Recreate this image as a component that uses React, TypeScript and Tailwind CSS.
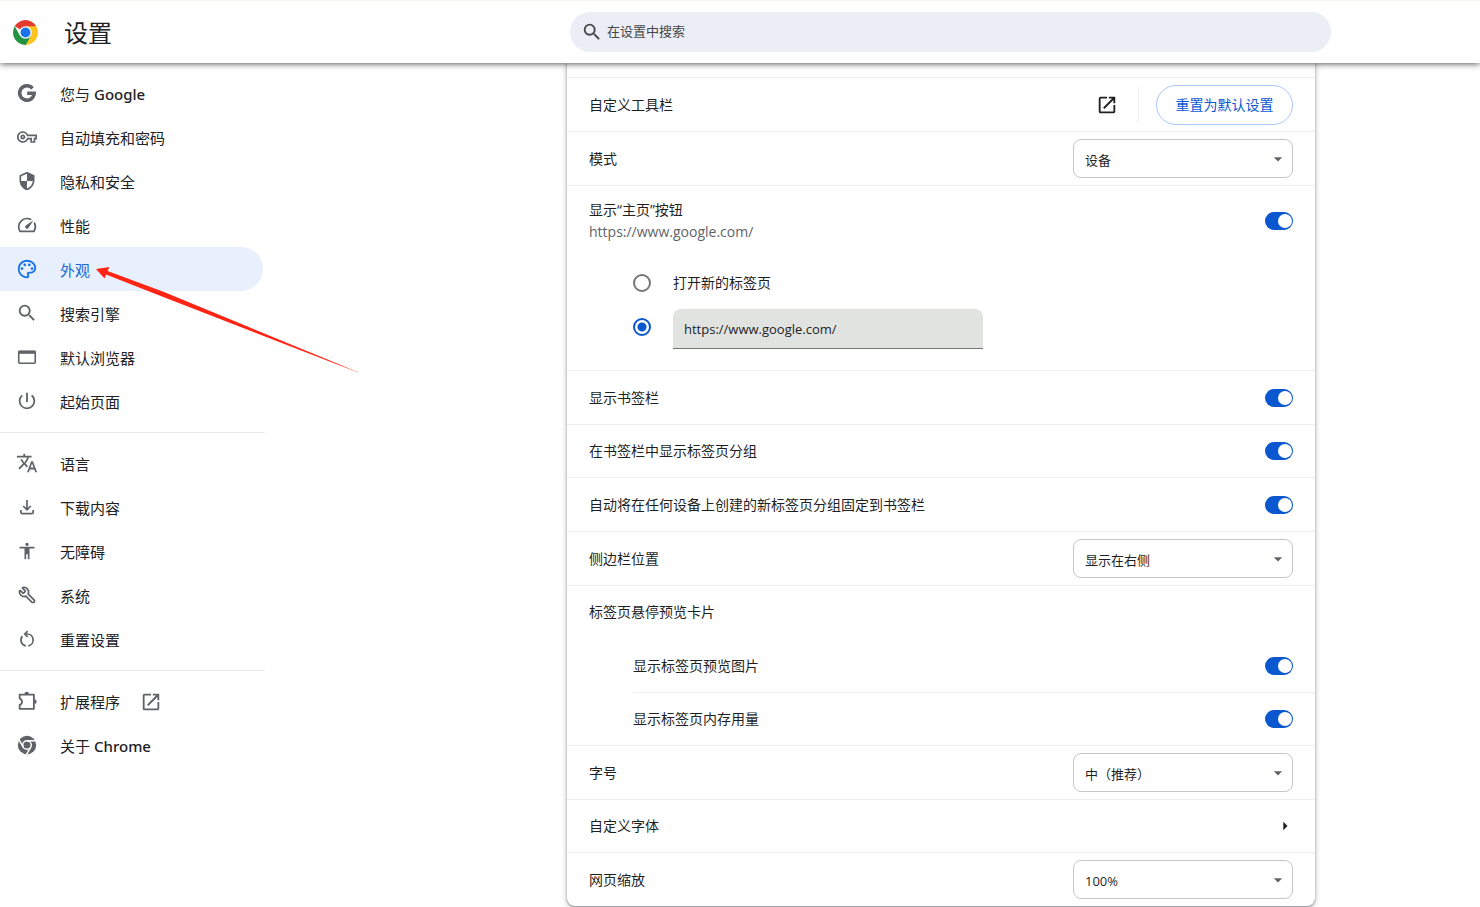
import { useState } from "react";
import type { ReactNode } from "react";
import { clsx } from "clsx";
import { Wrench } from "lucide-react";
import {
  MdAccessibility,
  MdArrowDropDown,
  MdArrowRight,
  MdOpenInNew,
  MdOutlinePalette,
  MdOutlineVpnKey,
  MdPowerSettingsNew,
  MdSearch,
  MdSecurity,
} from "react-icons/md";

const ICON = "w-[22px] h-[22px]";

function GoogleIcon() {
  return (
    <svg viewBox="0 0 24 24" className={ICON} fill="none" stroke="currentColor" strokeWidth="3.9">
      <path d="M18 6.900A7.900 7.900 0 1 0 19.800 12.300H12.200" />
    </svg>
  );
}

function SpeedIcon() {
  return (
    <svg viewBox="0 0 24 24" className={ICON} fill="currentColor">
      <path d="m20.38 8.57-1.23 1.85a8 8 0 0 1-.22 7.58H5.07A8 8 0 0 1 15.58 6.85l1.85-1.23A10 10 0 0 0 3.35 19a2 2 0 0 0 1.72 1h13.85a2 2 0 0 0 1.74-1 10 10 0 0 0-.27-10.44z" />
      <path d="M10.59 15.41a2 2 0 0 0 2.83 0l5.66-8.49-8.49 5.66a2 2 0 0 0 0 2.83z" />
    </svg>
  );
}

function BrowserIcon() {
  return (
    <svg viewBox="0 0 22 22" className={ICON} fill="none" stroke="currentColor">
      <rect x="2.750" y="5.250" width="16.500" height="12" rx="1" strokeWidth="1.600" />
      <path d="M2.500 6.300h17" strokeWidth="3" />
    </svg>
  );
}

function TranslateIcon() {
  return (
    <svg viewBox="0 0 24 24" className={ICON} fill="currentColor">
      <path d="m12.87 15.07-2.54-2.51.03-.03A17.52 17.52 0 0 0 14.07 6H17V4h-7V2H8v2H1v2h11.17C11.5 7.92 10.44 9.75 9 11.35 8.07 10.32 7.3 9.19 6.69 8h-2c.73 1.63 1.73 3.17 2.98 4.56l-5.09 5.02L4 19l5-5 3.11 3.11.76-2.04zM18.5 10h-2L12 22h2l1.12-3h4.75L21 22h2l-4.500-12zm-2.62 7 1.62-4.33L19.12 17h-3.24z" />
    </svg>
  );
}

function DownloadIcon() {
  return (
    <svg viewBox="0 0 22 22" className={ICON} fill="none" stroke="currentColor" strokeWidth="1.700">
      <path d="M11 4v9.500M7.200 10l3.800 3.800 3.800-3.800M4.900 14v2.400a1.300 1.300 0 0 0 1.300 1.300h9.600a1.300 1.300 0 0 0 1.300-1.300V14" />
    </svg>
  );
}

function ResetIcon() {
  return (
    <svg viewBox="0 0 22 22" className={ICON} fill="none" stroke="currentColor" strokeWidth="1.700">
      <path d="M9.800 17.900A6 6 0 0 1 6.400 8.100" />
      <path d="M12.200 17.900A6 6 0 0 0 11 6H9" />
      <path d="m11.600 3.200-2.800 2.800 2.800 2.800" />
    </svg>
  );
}

function ExtensionIcon() {
  return (
    <svg viewBox="0 0 24 24" className={ICON} fill="currentColor">
      <path
        fill="none"
        stroke="currentColor"
        strokeWidth="2"
        strokeLinejoin="round"
        d="M4 5h15.500v15.500H4v-4.300a3.600 3.600 0 0 0 0-6.900z"
      />
      <path d="M9.200 4.500a2.500 2.500 0 0 1 5 0zM20 10.200a2.500 2.500 0 0 1 0 5z" />
    </svg>
  );
}

function ChromeIcon() {
  return (
    <svg viewBox="0 0 24 24" className={ICON}>
      <circle cx="12" cy="12" r="10" fill="currentColor" />
      <circle cx="12" cy="12" r="4.700" fill="none" stroke="white" strokeWidth="1.600" />
      <path d="M12 7.300h9.500M7.930 14.350 3.180 6.120M16.070 14.350l-4.750 8.230" stroke="white" strokeWidth="1.600" />
    </svg>
  );
}

function ChromeLogo() {
  return (
    <svg viewBox="0 0 48 48" className="w-[25px] h-[25px]">
      <path fill="#e33b2e" d="M24 24 3.220 12A24 24 0 0 1 44.780 12z" />
      <path fill="#fcc31e" d="M24 12h20.780A24 24 0 0 1 24 48l10.390-18z" />
      <path fill="#229342" d="M3.220 12 13.610 30 24 36h6.930L24 48A24 24 0 0 1 3.220 12z" />
      <path fill="#229342" d="M24 48 34.390 30 24 24 13.610 30z" />
      <circle cx="24" cy="24" r="12" fill="white" />
      <circle cx="24" cy="24" r="9.500" fill="#1a73e8" />
    </svg>
  );
}

interface NavItem {
  label: string;
  brand?: string;
  icon: ReactNode;
  external?: boolean;
}

const NAV_GROUPS: NavItem[][] = [
  [
    { label: "您与", brand: "Google", icon: <GoogleIcon /> },
    { label: "自动填充和密码", icon: <MdOutlineVpnKey className="w-5 h-5" /> },
    { label: "隐私和安全", icon: <MdSecurity className="w-5 h-5" /> },
    { label: "性能", icon: <SpeedIcon /> },
    { label: "外观", icon: <MdOutlinePalette className={ICON} /> },
    { label: "搜索引擎", icon: <MdSearch className={ICON} /> },
    { label: "默认浏览器", icon: <BrowserIcon /> },
    { label: "起始页面", icon: <MdPowerSettingsNew className={ICON} /> },
  ],
  [
    { label: "语言", icon: <TranslateIcon /> },
    { label: "下载内容", icon: <DownloadIcon /> },
    { label: "无障碍", icon: <MdAccessibility className="w-5 h-5" /> },
    { label: "系统", icon: <Wrench className="w-[18px] h-[18px] -scale-x-100" strokeWidth={2.3} /> },
    { label: "重置设置", icon: <ResetIcon /> },
  ],
  [
    { label: "扩展程序", icon: <ExtensionIcon />, external: true },
    { label: "关于", brand: "Chrome", icon: <ChromeIcon /> },
  ],
];

function Sidebar() {
  const [active, setActive] = useState("外观");

  return (
    <nav className="w-[265px] shrink-0 pt-2">
      {NAV_GROUPS.map((group, i) => (
        <ul key={i} className={clsx(i > 0 && "mt-[9px] border-t border-[#e8eaed] pt-2")}>
          {group.map((item) => (
            <li key={item.label}>
              <a
                href="#"
                onClick={() => setActive(item.label)}
                className={clsx(
                  "flex h-11 w-[263px] items-center rounded-r-full pl-4 pt-0.5 text-[15px]",
                  active === item.label ? "bg-[#e8f0fe] text-[#1967d2]" : "text-[#202124]"
                )}
              >
                <span
                  className={clsx(
                    "mr-[22px] flex w-[22px] justify-center pb-0.5",
                    active === item.label ? "text-[#1a73e8]" : "text-[#5f6368]"
                  )}
                >
                  {item.icon}
                </span>
                {item.label}
                {item.brand && <span className="ml-1 font-['Noto_Sans'] font-medium">{item.brand}</span>}
                {item.external && <MdOpenInNew className="ml-5 h-[22px] w-[22px] text-[#5f6368]" />}
              </a>
            </li>
          ))}
        </ul>
      ))}
    </nav>
  );
}

function Toggle({ id }: { id: string }) {
  const [on, setOn] = useState(true);
  return (
    <span className="relative inline-flex h-[18px] w-7 shrink-0">
      <input
        id={id}
        type="checkbox"
        role="switch"
        checked={on}
        onChange={(e) => setOn(e.target.checked)}
        className="peer h-full w-full cursor-pointer appearance-none rounded-full bg-[#747775] checked:bg-[#0b57d0]"
      />
      <span className="pointer-events-none absolute left-0.5 top-0.5 h-3.5 w-3.5 rounded-full bg-white peer-checked:left-[13px]" />
    </span>
  );
}

function ToggleRow({ id, label, className }: { id: string; label: string; className?: string }) {
  return (
    <div className={clsx("flex items-center justify-between border-t border-[#eeeeee]", className)}>
      <label htmlFor={id}>{label}</label>
      <Toggle id={id} />
    </div>
  );
}

function SelectRow({ id, label, options }: { id: string; label: string; options: string[] }) {
  return (
    <div className="flex h-[54px] items-center justify-between border-t border-[#eeeeee] px-[22px]">
      <label htmlFor={id}>{label}</label>
      <span className="relative flex">
        <select
          id={id}
          className="h-[39px] w-[220px] appearance-none rounded-lg border border-[#c4c7c5] bg-white pl-[11px] pr-8 pt-1 text-[13px] text-[#1f1f1f]"
        >
          {options.map((o) => (
            <option key={o}>{o}</option>
          ))}
        </select>
        <MdArrowDropDown className="pointer-events-none absolute right-[5px] top-2.5 h-5 w-5 text-[#5f6368]" />
      </span>
    </div>
  );
}

function HomeButtonSection() {
  const [mode, setMode] = useState("url");
  const radio =
    "h-[18px] w-[18px] appearance-none rounded-full border-2 border-[#747775] checked:border-[#0b57d0] checked:bg-[radial-gradient(circle,#0b57d0_0_4px,transparent_5px)]";

  return (
    <div className="h-[185px] border-t border-[#eeeeee] px-[22px]">
      <div className="flex h-[70px] items-center justify-between">
        <label htmlFor="home-button" className="leading-[22px]">
          显示“主页”按钮
          <span className="block text-[#5f6368]">https://www.google.com/</span>
        </label>
        <Toggle id="home-button" />
      </div>
      <div className="flex h-[53px] items-center gap-[22px] pl-11">
        <input id="home-ntp" type="radio" name="home" className={radio} checked={mode === "ntp"} onChange={() => setMode("ntp")} />
        <label htmlFor="home-ntp">打开新的标签页</label>
      </div>
      <div className="flex gap-[22px] pl-11">
        <input
          type="radio"
          name="home"
          aria-label="https://www.google.com/"
          className={clsx(radio, "mt-[9px]")}
          checked={mode === "url"}
          onChange={() => setMode("url")}
        />
        <input
          type="text"
          aria-label="https://www.google.com/"
          defaultValue="https://www.google.com/"
          className="h-10 w-[310px] rounded-t-lg border-b border-[#747775] bg-[#e1e3e1] px-[11px] text-[13px] text-[#1f1f1f] outline-none"
        />
      </div>
    </div>
  );
}

function AppearanceCard() {
  return (
    <section className="w-full max-w-[748px] rounded-b-lg bg-white pt-3.5 text-sm text-[#1f1f1f] shadow-[0_1px_2px_rgba(60,64,67,0.5),0_1px_5px_1px_rgba(60,64,67,0.25)]">
      <div className="flex h-[54px] items-center border-t border-[#eeeeee] px-[22px]">
        <span className="flex-1">自定义工具栏</span>
        <a href="#" aria-label="自定义工具栏" className="mr-5">
          <MdOpenInNew className="h-[22px] w-[22px]" />
        </a>
        <span className="mr-[17px] h-[35px] border-l border-[#eeeeee]" />
        <button className="h-10 w-[137px] rounded-full border border-[#a8c7fa] text-[#0b57d0]">重置为默认设置</button>
      </div>
      <SelectRow id="mode" label="模式" options={["设备", "浅色", "深色"]} />
      <HomeButtonSection />
      <ToggleRow id="bookmarks-bar" label="显示书签栏" className="h-[54px] px-[22px]" />
      <ToggleRow id="tab-groups" label="在书签栏中显示标签页分组" className="h-[53px] px-[22px]" />
      <ToggleRow id="pin-groups" label="自动将在任何设备上创建的新标签页分组固定到书签栏" className="h-[54px] px-[22px]" />
      <SelectRow id="side-panel" label="侧边栏位置" options={["显示在右侧", "显示在左侧"]} />
      <div className="flex h-[53px] items-center border-t border-[#eeeeee] px-[22px]">标签页悬停预览卡片</div>
      <div className="pl-[66px]">
        <ToggleRow id="hover-image" label="显示标签页预览图片" className="h-[54px] border-t-transparent pr-[22px]" />
        <ToggleRow id="hover-memory" label="显示标签页内存用量" className="h-[53px] pr-[22px]" />
      </div>
      <SelectRow id="font-size" label="字号" options={["中（推荐）", "小", "大"]} />
      <button className="flex h-[53px] w-full items-center justify-between border-t border-[#eeeeee] pl-[22px] pr-5 text-left">
        自定义字体
        <MdArrowRight className="h-5 w-5" />
      </button>
      <SelectRow id="zoom" label="网页缩放" options={["100%", "125%", "150%"]} />
    </section>
  );
}

export default function App() {
  return (
    <div className="flex min-h-screen flex-col bg-white font-['Open_Sans','Noto_Sans_CJK_SC',sans-serif]">
      <header className="relative z-10 flex h-[63px] items-center border-t border-[#fdf3f1] bg-white shadow-[0_1px_6px_rgba(0,0,0,0.65)]">
        <div className="flex w-[266px] shrink-0 items-center gap-[26px] pl-[13px]">
          <ChromeLogo />
          <h1 className="pt-0.5 text-2xl text-[#202124]">设置</h1>
        </div>
        <div className="flex flex-1 justify-center pl-[155px]">
          <label className="flex h-10 w-full max-w-[761px] items-center gap-1 rounded-full bg-[#ebeef7] pl-[11px]">
            <MdSearch className="h-[22px] w-[22px] text-[#444746]" />
            <input
              type="text"
              aria-label="在设置中搜索"
              placeholder="在设置中搜索"
              className="flex-1 bg-transparent text-[13px] text-[#1f1f1f] outline-none placeholder:text-[#474747]"
            />
          </label>
        </div>
      </header>

      <main className="flex flex-1 items-start">
        <Sidebar />
        <div className="flex flex-1 justify-center pl-[137px]">
          <AppearanceCard />
        </div>
      </main>

      {/* Pointer arrow over the page */}
      <svg viewBox="0 0 264 108" className="pointer-events-none absolute left-24 top-[265px] z-20 h-[108px] w-[264px]">
        <defs>
          <linearGradient id="tail" x1="0" x2="1">
            <stop offset="0.92" stopColor="#ff2414" />
            <stop offset="1" stopColor="#ff2414" stopOpacity="0.5" />
          </linearGradient>
        </defs>
        <path fill="url(#tail)" d="M0 4 13.500 2 11.500 6 68 27 263 107.500 262 107.500 66 31.500 10 9.500 8.500 13.500z" />
      </svg>
    </div>
  );
}
